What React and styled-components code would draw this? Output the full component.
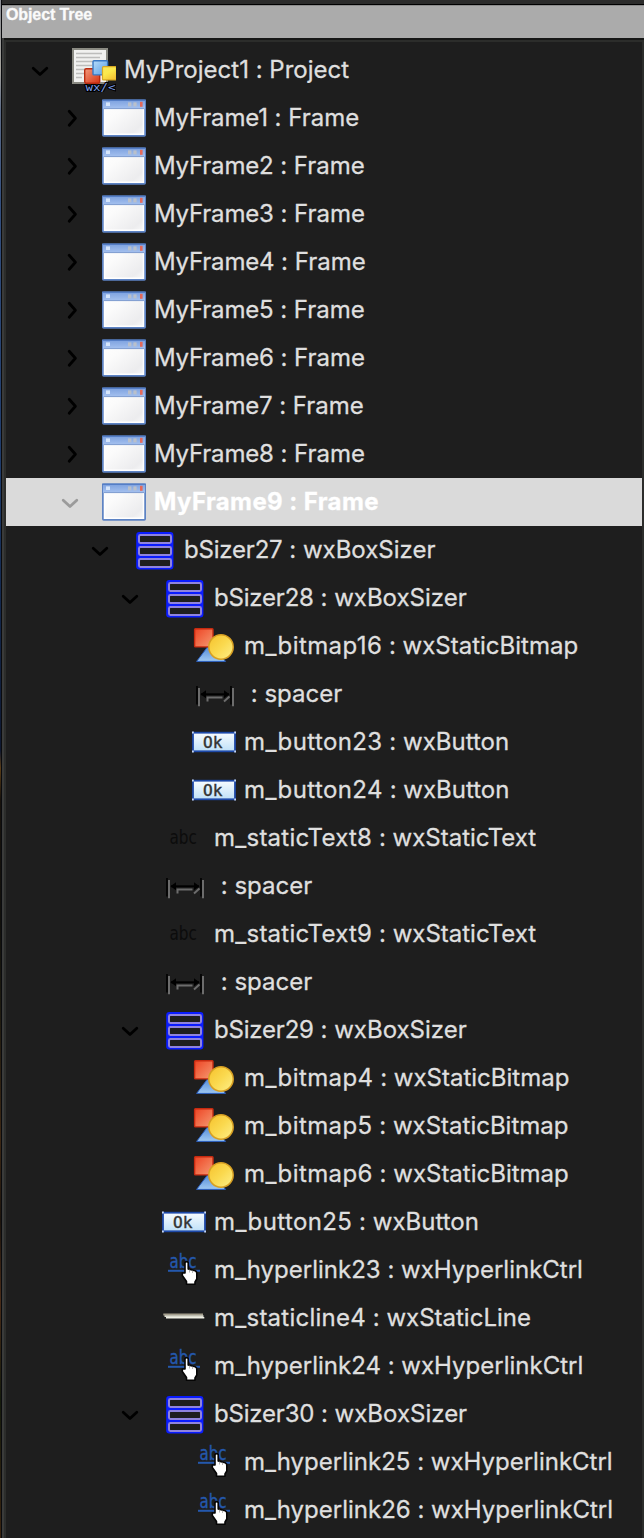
import React from "react";
import styled, { createGlobalStyle } from "styled-components";

const GlobalStyle = createGlobalStyle`
  html, body { margin: 0; background: #1e1e1e; }
  * { box-sizing: border-box; }
`;

const Window = styled.div`
  display: flex;
  width: 644px;
  height: 1538px;
  overflow: hidden;
  background: #1e1e1e;
`;

const DesktopEdge = styled.div`
  flex: none;
  width: 2px;
  border-right: 1px solid #0a0b0e;
  background: linear-gradient(
    #8d9096 0, #a5a39c 70px, #5e6d88 110px, #34507f 200px, #1d3a69 480px,
    #142a50 590px, #0e1830 750px, #5a3d16 768px, #17120c 800px, #11100c 920px,
    #1c1a10 1000px, #3d2814 1140px, #1d150d 1220px, #4a2c18 1300px, #151b0c 1400px, #3a2410 1538px
  );
`;

const Pane = styled.div`
  flex: 1;
  min-width: 0;
  display: flex;
  flex-direction: column;
`;

const Sash = styled.div`
  flex: none;
  height: 5px;
  background: #2c2c2b;
  border-bottom: 1px solid #000;
`;

const Caption = styled.div`
  flex: none;
  height: 33px;
  padding: 0 0 0 4px;
  border-top: 1px solid #8c8c8c;
  background: #ababab;
  color: #fafafa;
  font: bold 16px/18px "Liberation Sans", Arial, sans-serif;
  letter-spacing: -0.1px;
  -webkit-text-stroke: 0.3px #fafafa;
`;

const TreeFrame = styled.div`
  flex: 1;
  border-style: solid;
  border-color: #2c2d2b;
  border-width: 2px 2px 0 2px;
  margin: 2px 0 0 2px;
`;

const TreeTop = styled.div`
  flex: 1;
  display: flex;
  background: linear-gradient(90deg, #3a3b3a 2px, #161716 2px);
`;

const TreeList = styled.ul`
  margin: 0;
  padding: 4px 0 0;
  list-style: none;
  height: 100%;
  background: #1e1e1e;
`;

const Row = styled.li`
  display: flex;
  align-items: center;
  height: 48px;
  padding-left: ${(p) => 20 + p.$depth * 30}px;
  background: ${(p) => (p.$selected ? "#dadada" : "transparent")};
  color: ${(p) => (p.$selected ? "#fff" : "#dfdfdf")};
`;

const Toggle = styled.span`
  flex: none;
  display: flex;
  width: 28px;
  height: 28px;
  margin-right: 18px;
  color: ${(p) => (p.$selected ? "#9b9b9b" : "#000")};
`;

const Glyph = styled.svg`
  flex: none;
  display: block;
  width: 44px;
  height: 44px;
  overflow: hidden;
`;

const Label = styled.span`
  margin-left: 8px;
  white-space: pre;
  font-family: Inter, sans-serif;
  font-size: 24px;
  line-height: 48px;
  font-weight: ${(p) => (p.$selected ? 700 : 400)};
  letter-spacing: ${(p) => (p.$selected ? 0.4 : 0)}px;
  font-feature-settings: "calt" 0;
  -webkit-text-stroke: 0.3px currentColor;
`;

const Name = styled.span`
  letter-spacing: ${(p) => p.$track}px;
`;

function Chevron({ open }) {
  return (
    <svg width="28" height="28" viewBox="0 0 28 28" fill="none" stroke="currentColor" strokeWidth="2.8" strokeLinecap="round" strokeLinejoin="round">
      {open ? <path d="M7.2 12.2 14 18.6 20.8 12.2" /> : <path d="M13.2 7.2 19.4 14.2 13.2 21.2" />}
    </svg>
  );
}

function Gradients() {
  return (
    <svg width="0" height="0" style={{ position: "absolute" }}>
      <defs>
        <linearGradient id="pane" x1="0" y1="0" x2="1" y2="1">
          <stop offset="0" stopColor="#fff" /><stop offset="0.35" stopColor="#fbfbfb" />
          <stop offset="0.8" stopColor="#ececee" /><stop offset="1" stopColor="#fafafa" />
        </linearGradient>
        <linearGradient id="title" x1="0" y1="0" x2="0" y2="1">
          <stop offset="0" stopColor="#7fa3e0" /><stop offset="1" stopColor="#a5c1ef" />
        </linearGradient>
        <linearGradient id="red" x1="0" y1="0" x2="1" y2="1">
          <stop offset="0" stopColor="#ee4424" /><stop offset="1" stopColor="#f59a72" />
        </linearGradient>
        <linearGradient id="redBox" x1="0" y1="0" x2="1" y2="1">
          <stop offset="0" stopColor="#f39a7c" /><stop offset="1" stopColor="#d63212" />
        </linearGradient>
        <linearGradient id="yellow" x1="0" y1="0" x2="1" y2="1">
          <stop offset="0" stopColor="#f6c12c" /><stop offset="0.5" stopColor="#fad94f" /><stop offset="1" stopColor="#fdf08a" />
        </linearGradient>
        <linearGradient id="yellowBox" x1="0" y1="0" x2="0.6" y2="1">
          <stop offset="0" stopColor="#f9e65e" /><stop offset="0.5" stopColor="#fbe94c" /><stop offset="1" stopColor="#f5c535" />
        </linearGradient>
        <linearGradient id="blue" x1="0" y1="0" x2="0" y2="1">
          <stop offset="0" stopColor="#3f7bd0" /><stop offset="1" stopColor="#9fc9f2" />
        </linearGradient>
        <linearGradient id="blueBox" x1="0" y1="0" x2="1" y2="1">
          <stop offset="0" stopColor="#b7dcfa" /><stop offset="1" stopColor="#559be2" />
        </linearGradient>
        <linearGradient id="btn" x1="0" y1="0" x2="0" y2="1">
          <stop offset="0" stopColor="#f8fcff" /><stop offset="1" stopColor="#bfe0f8" />
        </linearGradient>
      </defs>
    </svg>
  );
}

const icons = {
  project: (
    <>
      <rect x="1" y="1" width="34" height="34" fill="#f1f1ef" stroke="#8b8b83" strokeWidth="2" />
      <path d="M4 5.5H30M4 9.5H28M4 13.5H24M4 17.5H20M4 21.5H14M4 25.5H12M4 29.5H10" stroke="#bdbdbb" strokeWidth="1.6" />
      <rect x="12.7" y="20.7" width="15" height="14.6" rx="1.5" fill="url(#redBox)" stroke="#b92b10" strokeWidth="1.4" />
      <rect x="21" y="12.7" width="14.6" height="14.2" rx="1" fill="url(#blueBox)" stroke="#3878c4" strokeWidth="1.4" />
      <rect x="30.5" y="18.7" width="14" height="13.2" rx="1" fill="url(#yellowBox)" stroke="#d8a822" strokeWidth="1.2" />
      <text x="13.5" y="43.2" fontFamily="DejaVu Sans Mono, monospace" fontSize="10" textLength="30" lengthAdjust="spacingAndGlyphs" fill="#7e9fe8" stroke="#000" strokeWidth="2" paintOrder="stroke">{"wx/<"}</text>
    </>
  ),
  frame: (
    <>
      <rect x="0.9" y="4.4" width="42.2" height="35.4" rx="0.8" fill="url(#pane)" stroke="#5d83c4" strokeWidth="1.8" />
      <rect x="1" y="4.6" width="42" height="8" fill="url(#title)" />
      <path d="M0 4.3H44" stroke="#557ec6" strokeWidth="1.5" />
      <path d="M2.6 13V38.3H41.4V13" fill="none" stroke="#fff" strokeWidth="1.4" />
      <path d="M2 12.6H42" stroke="#7d9bcf" strokeWidth="1" />
      <rect x="4" y="6.4" width="4" height="3.6" fill="#d5e5fb" />
      <rect x="26" y="6.4" width="3.4" height="4" fill="#b9c0cb" />
      <rect x="31.4" y="6.4" width="3.2" height="4" fill="#b9c0cb" />
      <rect x="38" y="5.8" width="2.6" height="5" fill="#e5695a" />
    </>
  ),
  sizer: (
    <>
      <rect x="4.2" y="4" width="37.2" height="37.6" rx="3" fill="#0a1cff" />
      {[8, 20, 32].map((y) => (
        <rect key={y} x="7" y={y - 1} width="32" height="8" rx="1.4" fill="#1e1e1e" stroke="#8f83dd" strokeWidth="2" />
      ))}
    </>
  ),
  bitmap: (
    <>
      <path d="M18.5 19 33.5 37.4H4.6Z" fill="url(#blue)" stroke="#2a5fc0" strokeWidth="1" />
      <rect x="2.6" y="4.7" width="18.4" height="18.2" rx="0.8" fill="url(#red)" stroke="#c62a10" strokeWidth="1.4" />
      <circle cx="29" cy="23" r="12.2" fill="url(#yellow)" stroke="#d79f23" strokeWidth="1.5" />
    </>
  ),
  spacer: (
    <>
      <path d="M5 14V32.5M39 14V32.5" stroke="#000" strokeWidth="1.6" />
      <path d="M7 16V34.3M41 16V34.3" stroke="#6c6c6c" strokeWidth="2" />
      <path d="M15.5 29.5V25.5H30.5M32 29.5 37.5 24.5" fill="none" stroke="#6c6c6c" strokeWidth="2" />
      <path d="M9 22.3H37" stroke="#000" strokeWidth="2" />
      <path d="M8.5 22.3 14 18.3V26.3ZM37.5 22.3 32 18.3V26.3Z" fill="#000" />
    </>
  ),
  button: (
    <>
      <rect x="1" y="12.7" width="42" height="18.6" fill="url(#btn)" stroke="#1d49a8" strokeWidth="1.8" />
      <path d="M0 12.5h1.8M42.2 12.5H44M0 31.5h1.8M42.2 31.5H44" stroke="#c6d7f4" strokeWidth="1.8" />
      <text x="11" y="27.8" fontFamily="DejaVu Sans Mono, monospace" fontSize="15.5" textLength="19.5" lengthAdjust="spacingAndGlyphs" fill="#333" stroke="#333" strokeWidth="0.4">Ok</text>
    </>
  ),
  text: (
    <text x="7.5" y="28" fontFamily="DejaVu Sans, sans-serif" fontSize="20" textLength="27.5" lengthAdjust="spacingAndGlyphs" fill="#0c0c0c">abc</text>
  ),
  link: (
    <>
      <text x="7.5" y="20" fontFamily="DejaVu Sans, sans-serif" fontSize="20" textLength="27" lengthAdjust="spacingAndGlyphs" fill="#2458ad" stroke="#2458ad" strokeWidth="0.4">abc</text>
      <path d="M6 22.8H38" stroke="#2458ad" strokeWidth="2" />
      <path d="M23 14.5q1.600-1.600 3.200 0V21l7 1.800q1.800.8 1.600 3V31l-1.800 3v2.200H24.500V33.500L20.300 27.500v-2.500h2.700Z" fill="#fff" stroke="#050505" strokeWidth="1.600" strokeLinejoin="round" />
      <path d="M27.500 21.500v3M30.500 22.500v2.500" stroke="#999" strokeWidth="0.700" />
    </>
  ),
  line: (
    <>
      <path d="M1.300 18.400H41" stroke="#a39d8c" strokeWidth="2" />
      <path d="M2.500 20.200H41.500" stroke="#dcdccf" strokeWidth="1.800" />
      <path d="M4 21.800H42.300" stroke="#eeeee4" strokeWidth="1.500" />
    </>
  ),
};

const nodes = [
  { depth: 0, icon: "project", open: true, name: "MyProject1", type: "Project" },
  ...[1, 2, 3, 4, 5, 6, 7, 8].map((n) => ({ depth: 1, icon: "frame", open: false, name: `MyFrame${n}`, type: "Frame" })),
  { depth: 1, icon: "frame", open: true, selected: true, name: "MyFrame9", type: "Frame" },
  { depth: 2, icon: "sizer", open: true, name: "bSizer27", type: "wxBoxSizer" },
  { depth: 3, icon: "sizer", open: true, name: "bSizer28", type: "wxBoxSizer" },
  { depth: 4, icon: "bitmap", name: "m_bitmap16", type: "wxStaticBitmap" },
  { depth: 4, icon: "spacer", name: "", type: "spacer" },
  { depth: 4, icon: "button", name: "m_button23", type: "wxButton" },
  { depth: 4, icon: "button", name: "m_button24", type: "wxButton" },
  { depth: 3, icon: "text", name: "m_staticText8", type: "wxStaticText" },
  { depth: 3, icon: "spacer", name: "", type: "spacer" },
  { depth: 3, icon: "text", name: "m_staticText9", type: "wxStaticText" },
  { depth: 3, icon: "spacer", name: "", type: "spacer" },
  { depth: 3, icon: "sizer", open: true, name: "bSizer29", type: "wxBoxSizer" },
  { depth: 4, icon: "bitmap", name: "m_bitmap4", type: "wxStaticBitmap" },
  { depth: 4, icon: "bitmap", name: "m_bitmap5", type: "wxStaticBitmap" },
  { depth: 4, icon: "bitmap", name: "m_bitmap6", type: "wxStaticBitmap" },
  { depth: 3, icon: "button", name: "m_button25", type: "wxButton" },
  { depth: 3, icon: "link", name: "m_hyperlink23", type: "wxHyperlinkCtrl" },
  { depth: 3, icon: "line", name: "m_staticline4", type: "wxStaticLine" },
  { depth: 3, icon: "link", name: "m_hyperlink24", type: "wxHyperlinkCtrl" },
  { depth: 3, icon: "sizer", open: true, name: "bSizer30", type: "wxBoxSizer" },
  { depth: 4, icon: "link", name: "m_hyperlink25", type: "wxHyperlinkCtrl" },
  { depth: 4, icon: "link", name: "m_hyperlink26", type: "wxHyperlinkCtrl" },
];

const tracking = { bitmap: 0.4, button: 0.4, text: 0.25, line: 0.25, frame: -0.2, sizer: -0.2 };

function TreeRow({ node }) {
  return (
    <Row $depth={node.depth} $selected={node.selected}>
      <Toggle $selected={node.selected}>{node.open !== undefined && <Chevron open={node.open} />}</Toggle>
      <Glyph viewBox="0 0 44 44">{icons[node.icon]}</Glyph>
      <Label $selected={node.selected}>
        <Name $track={node.selected ? 0.4 : tracking[node.icon] || 0}>{node.name}</Name>
        {` : ${node.type}`}
      </Label>
    </Row>
  );
}

export default function App() {
  return (
    <Window>
      <GlobalStyle />
      <Gradients />
      <DesktopEdge />
      <Pane>
        <Sash />
        <Caption>Object Tree</Caption>
        <TreeTop>
          <TreeFrame>
            <TreeList>
              {nodes.map((node, i) => <TreeRow key={i} node={node} />)}
            </TreeList>
          </TreeFrame>
        </TreeTop>
      </Pane>
    </Window>
  );
}
